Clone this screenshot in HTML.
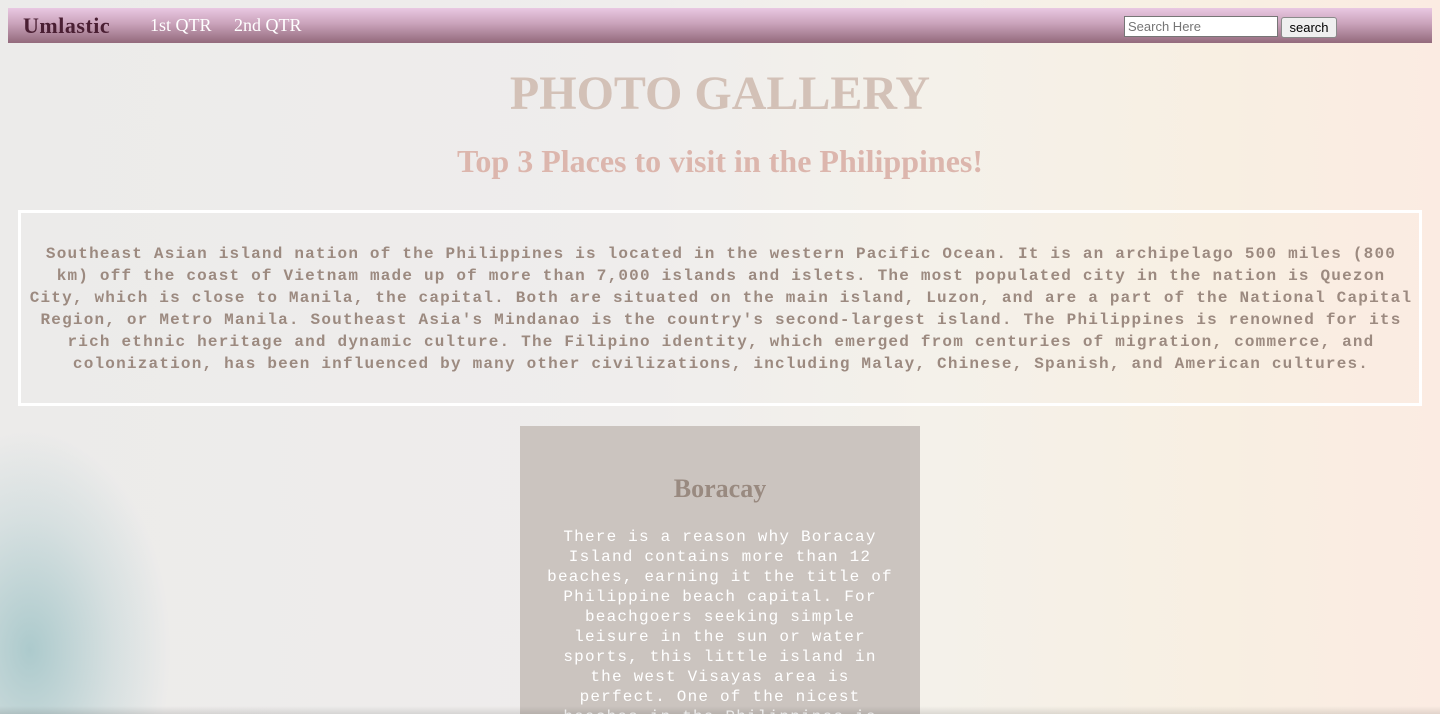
<!DOCTYPE html>
<html><head><meta charset="utf-8"><style>
html,body{margin:0;padding:0;}
body{width:1440px;height:714px;overflow:hidden;position:relative;
background:
radial-gradient(ellipse 140px 220px at 30px 650px, rgba(120,175,180,0.55), rgba(150,190,195,0.25) 60%, rgba(0,0,0,0) 100%),
linear-gradient(90deg,#ecebea 0%,#efedec 45%,#f4f1ea 65%,#f8efe2 85%,#fbebe2 100%);
font-family:"Liberation Serif",serif;}
.nav{position:absolute;left:8px;top:8px;width:1424px;height:35px;background:linear-gradient(#e9c8e2,#c9a2ba 45%,#936a7c);}
.brand{position:absolute;left:15px;top:5px;font-size:22px;font-weight:bold;color:#4a1f33;letter-spacing:0.5px;}
.lnk{position:absolute;top:7px;font-size:18px;color:#fff;}
.inp{position:absolute;left:1116px;top:8px;width:149px;height:19px;border:1px solid #767676;background:#fff;font:13px "Liberation Sans",sans-serif;color:#757575;line-height:19px;padding-left:3px;box-sizing:content-box;}
.btn{position:absolute;left:1273px;top:9px;width:54px;height:19px;border:1px solid #8a8a8a;border-radius:3px;background:#efefef;font:13px "Liberation Sans",sans-serif;color:#000;text-align:center;line-height:19px;}
h1{position:absolute;left:0;width:1440px;top:64px;margin:0;text-align:center;font-size:48px;color:#d3c1b7;font-weight:bold;line-height:60px;}
h2{position:absolute;left:0;width:1440px;top:142px;margin:0;text-align:center;font-size:32px;color:#dcb6ad;font-weight:bold;line-height:38px;}
.box{position:absolute;left:18px;top:210px;width:1398px;height:190px;border:3px solid #fff;}
.box p{margin:0;padding:30px 4px 0 6px;text-align:center;font:bold 16px/22px "Liberation Mono",monospace;letter-spacing:1.2px;color:#9c8a80;}
.card{position:absolute;left:520px;top:426px;width:400px;height:288px;overflow:hidden;background:#cbc4bf;text-align:center;}
.card h3{margin:0;padding-top:47px;font-size:26px;color:#998a80;font-weight:bold;line-height:32px;}
.card p{margin:22px 0 0;padding:0 24px;font:16px/20px "Liberation Mono",monospace;letter-spacing:1.2px;color:#fff;}
.shade{position:absolute;left:0;top:706px;width:1440px;height:8px;background:linear-gradient(rgba(0,0,0,0),rgba(0,0,0,0.1));}
</style></head><body>
<div class="nav">
<div class="brand">Umlastic</div>
<div class="lnk" style="left:142px">1st QTR</div>
<div class="lnk" style="left:226px">2nd QTR</div>
<div class="inp">Search Here</div>
<div class="btn">search</div>
</div>
<h1>PHOTO GALLERY</h1>
<h2>Top 3 Places to visit in the Philippines!</h2>
<div class="box"><p>Southeast Asian island nation of the Philippines is located in the western Pacific Ocean. It is an archipelago 500 miles (800 km) off the coast of Vietnam made up of more than 7,000 islands and islets. The most populated city in the nation is Quezon City, which is close to Manila, the capital. Both are situated on the main island, Luzon, and are a part of the National Capital Region, or Metro Manila. Southeast Asia's Mindanao is the country's second-largest island. The Philippines is renowned for its rich ethnic heritage and dynamic culture. The Filipino identity, which emerged from centuries of migration, commerce, and colonization, has been influenced by many other civilizations, including Malay, Chinese, Spanish, and American cultures.</p></div>
<div class="card"><h3>Boracay</h3><p>There is a reason why Boracay Island contains more than 12 beaches, earning it the title of Philippine beach capital. For beachgoers seeking simple leisure in the sun or water sports, this little island in the west Visayas area is perfect. One of the nicest beaches in the Philippines is</p></div>
<div class="shade"></div>
</body></html>
